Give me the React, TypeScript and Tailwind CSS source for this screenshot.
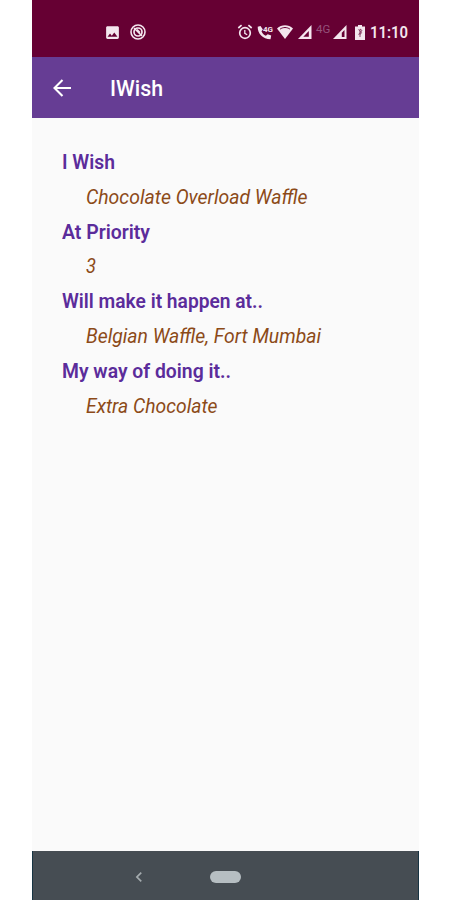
import { MdImage, MdChevronLeft } from 'react-icons/md'

interface WishField {
  label: string
  value: string
  labelWidth: number
  valueWidth: number
}

const fields: WishField[] = [
  { label: 'I Wish', value: 'Chocolate Overload Waffle', labelWidth: 53, valueWidth: 221.5 },
  { label: 'At Priority', value: '3', labelWidth: 88, valueWidth: 10 },
  { label: 'Will make it happen at..', value: 'Belgian Waffle, Fort Mumbai', labelWidth: 201, valueWidth: 235 },
  { label: 'My way of doing it..', value: 'Extra Chocolate', labelWidth: 169, valueWidth: 131.5 },
]

function SignalIcon({ hole }: { hole: string }) {
  return (
    <svg className="h-[14px] w-[14px] shrink-0" viewBox="0 0 14 14">
      <path d="M0 14 13.5 0V14Z" fill="#f4e6ee" />
      <path d={hole} fill="#660033" />
    </svg>
  )
}

function StatusBar() {
  return (
    <div className="flex h-[57px] shrink-0 items-center bg-[#660033] pt-[7px] text-[#f4e6ee]">
      <MdImage className="ml-[72px] h-[17px] w-[17px]" />
      <svg className="ml-[9px] h-4 w-4" viewBox="0 0 16 16" fill="none" stroke="currentColor">
        <circle cx="8" cy="8" r="7" strokeWidth="1.6" />
        <circle cx="8" cy="8" r="4" strokeWidth="1.7" />
        <path d="m4 4 8 8M7 5.5l3 3" strokeWidth="1.5" />
      </svg>

      <svg className="ml-[91px] h-4 w-4" viewBox="0 0 16 16" fill="none" stroke="currentColor" strokeWidth="1.7">
        <circle cx="8" cy="9" r="5.3" />
        <path d="M1.3 4 4.6 1.2M14.7 4l-3.3-2.8" />
        <path d="M7.8 6v3.4l2.4 1.4" strokeWidth="1.3" />
      </svg>
      <svg className="ml-1 h-4 w-[17px]" viewBox="0 0 17 16">
        <path
          d="M3.5 2 .7 2.7C.5 9.5 5.8 15 13.5 15.3l.7-3.8-3.5-1.3-1.9 1.5C6.7 10.7 5.4 9.4 4.5 7.2l1.4-1.8Z"
          fill="currentColor"
        />
        <text x="6" y="8" fill="currentColor" className="font-['Roboto',sans-serif] text-[8px] font-bold">
          4G
        </text>
      </svg>
      <svg className="ml-[3px] h-[14px] w-4" viewBox="0 0 16 14">
        <path d="M0 3.4C4.7-.9 11.3-.9 16 3.4L8 14Z" fill="currentColor" />
        <path d="M3.1 4.1c3-2.1 6.8-2.1 9.8 0" fill="none" stroke="#660033" strokeWidth="1" />
      </svg>
      <div className="ml-[5px] flex">
        <SignalIcon hole="M5.3 11.8 10.8 6V11.8Z" />
      </div>
      <span className="ml-1 w-[15px] -translate-y-[2px] font-['Roboto',sans-serif] text-[11.5px] leading-none text-[#94527a]">
        4G
      </span>
      <div className="ml-[2px] flex">
        <SignalIcon hole="M8.8 12V7.7L11.5 5V12Z" />
      </div>
      <svg className="ml-2 h-[15px] w-[10px]" viewBox="0 0 10 15">
        <path d="M3 0h4v1.5h3V15H0V1.5h3Z" fill="currentColor" />
        <path d="m3.5 4.5 3 3.3L5 9.5V4l2 1.5-3.5 4M5 8v4" fill="none" stroke="#8a4066" strokeWidth="1" />
      </svg>
      <svg className="ml-[5px] h-6 w-[44px]" viewBox="0 0 44 24">
        <text
          x="0"
          y="17.5"
          textLength="38"
          lengthAdjust="spacingAndGlyphs"
          fill="currentColor"
          className="font-['Roboto',sans-serif] text-[16px] font-semibold"
        >
          11:10
        </text>
      </svg>
    </div>
  )
}

function AppBar() {
  return (
    <header className="flex h-[61px] shrink-0 items-center bg-[#663d94] text-white">
      <svg className="ml-[18px] h-6 w-6" viewBox="0 0 24 24" fill="none" stroke="currentColor" strokeWidth="2.1">
        <path d="M21 12H5M12.5 4 4.5 12l8 8" />
      </svg>
      <svg className="ml-9 h-8 w-20" viewBox="0 0 80 32">
        <text
          x="0"
          y="24"
          textLength="53"
          lengthAdjust="spacingAndGlyphs"
          fill="currentColor"
          className="font-['Roboto',sans-serif] text-[22px] font-medium"
        >
          IWish
        </text>
      </svg>
    </header>
  )
}

function Field({ label, value, labelWidth, valueWidth }: WishField) {
  return (
    <div className="font-['Roboto',sans-serif]">
      <svg className="block h-[34.8px] w-full">
        <text
          x="0"
          y="25"
          textLength={labelWidth}
          lengthAdjust="spacingAndGlyphs"
          fill="#5b2c9b"
          className="text-[19.5px] font-semibold"
        >
          {label}
        </text>
      </svg>
      <svg className="ml-6 block h-[34.8px] w-[300px]">
        <text
          x="0"
          y="25"
          textLength={valueWidth}
          lengthAdjust="spacingAndGlyphs"
          fill="#8c4a18"
          className="text-[19.5px] italic"
        >
          {value}
        </text>
      </svg>
    </div>
  )
}

export default function App() {
  return (
    <div className="flex h-[900px] w-[450px] justify-center bg-white pl-px">
      <div className="flex w-[387px] flex-col bg-[#fafafa]">
        <StatusBar />
        <AppBar />
        <main className="flex-1 pt-[26px] pl-[30px]">
          {fields.map((field) => (
            <Field key={field.label} {...field} />
          ))}
        </main>
        <nav className="flex h-[49px] shrink-0 items-center border-x border-[#173443] bg-[#464d53] pt-[2px]">
          <MdChevronLeft className="ml-[96px] h-5 w-5 text-[#a4abae]" />
          <div className="ml-[61px] h-3 w-[31px] rounded-full bg-[#b6bec2]" />
        </nav>
      </div>
    </div>
  )
}
